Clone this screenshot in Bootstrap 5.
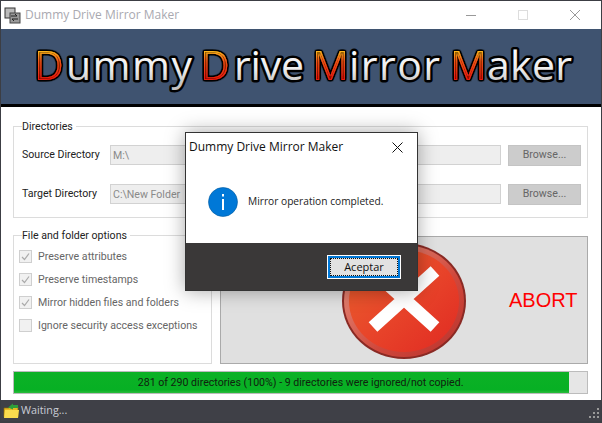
<!DOCTYPE html>
<html lang="en">
<head>
  <meta charset="utf-8">
  <meta name="viewport" content="width=device-width, initial-scale=1">
  <title>Dummy Drive Mirror Maker</title>
  <link href="https://cdn.jsdelivr.net/npm/bootstrap@5.3.2/dist/css/bootstrap.min.css" rel="stylesheet">
  <style>
    html, body { width: 602px; height: 423px; overflow: hidden; }
    body { background: #3c3e44; font-family: "Roboto", sans-serif; font-size: 10.6px; color: #222; }
    .app-window { position: relative; width: 600px; height: 420px; margin: 1px 0 0 1px; background: #fff; }
    .title-row { height: 28px; color: #a9a9b0; font-family: "Open Sans", sans-serif; font-size: 12px; padding-left: 3px; }
    .win-btn { width: 52px; height: 28px; }
    .banner { height: 78px; background: #3f5370; border-bottom: 3px solid #000; }
    .banner svg { display: block; }
    .banner text { font-family: "Open Sans", sans-serif; font-size: 41px; font-weight: 500; }
    .white-part { fill: url(#whiteFill); stroke: #000; stroke-width: 5px; stroke-linejoin: round; paint-order: stroke; }
    .fire-part { fill: url(#fireFill); filter: url(#fireEdge); }
    .content-area { padding: 11px 13px 0 12px; }
    .box-group { border: 1px solid #dcdcdc; margin: 0; min-width: 0; }
    .box-group legend { float: none; width: auto; font-size: 10.6px; line-height: 14px; margin: 0; padding: 2px 3px 0 0; color: #222; }
    .dir-box { height: 100px; padding: 0 6px 0 8px; }
    .dir-row { height: 22px; }
    .row-one { margin-top: 10px; }
    .row-two { margin-top: 17px; }
    .dir-label { width: 88px; flex: none; white-space: nowrap; color: #222; }
    .dir-input { height: 20px; min-width: 0; border: 1px solid #d2d2d2; color: #8a8a8a; font-size: 10.6px; padding: 0 2px; border-radius: 0; }
    .dir-input:disabled { background: #eee; }
    .browse-btn, .browse-btn:disabled { width: 73px; height: 21px; flex: none; margin-left: 7px; background: #ccc; border: 1px solid #c4c4c4; border-radius: 0; color: #666; font-size: 10.6px; padding: 0; opacity: 1; }
    .lower-row { margin-top: 9px; }
    .options-box { width: 199px; height: 137px; padding: 2px 5px 0; }
    .options-box legend { margin-left: 3px; }
    .opt-row { height: 23px; color: #666; white-space: nowrap; }
    .opt-check { width: 13px; height: 13px; border: 1px solid #cfcfcf; background: #f1f1f1; margin-right: 6px; flex: none; }
    .abort-panel { height: 128px; background: #e0e0e0; border: 1px solid #aaa; margin-top: 9px; }
    .ball-pic { margin: 2px 43px 0 0; }
    .abort-word { font-family: "Liberation Sans", sans-serif; font-size: 20px; color: #f00; width: 78px; }
    .copy-bar { height: 23px; margin-top: 7px; background: #e6e6e6; border: 1px solid #bcbcbc; border-radius: 0; font-size: 10.6px; }
    .copy-fill { width: 96.9%; padding-left: 18px; background: linear-gradient(#0cb126, #07b024 85%, #2abd3d); color: #10220f; }
    .status-row { position: absolute; left: 0; right: 0; top: 399px; height: 21px; background: #3f4047; color: #c9ccd6; font-family: "Open Sans", sans-serif; font-size: 10.8px; padding-left: 2px; }
    .status-row .grip { position: absolute; right: 1px; bottom: 1px; }
    .notice-box { position: absolute; left: 184px; top: 131px; width: 233px; height: 159px; background: #fff; border: 1px solid #333; box-shadow: 0 0 18px rgba(0,0,0,.35); }
    .notice-head { height: 28px; padding-left: 3px; font-family: "Open Sans", sans-serif; font-size: 12px; color: #111; }
    .notice-close { margin-right: 14px; }
    .notice-body { height: 82px; padding-left: 22px; color: #222; font-family: "Open Sans", sans-serif; font-size: 10.2px; }
    .info-pic { margin-right: 10px; }
    .notice-foot { height: 47px; background: #3a3838; padding-right: 17px; }
    .accept-btn { width: 72px; height: 22px; background: #e2e2e2; border: 2px solid #0078d7; outline: 1px solid #fff; border-radius: 0; font-family: "Open Sans", sans-serif; font-size: 11px; line-height: 14px; color: #111; padding: 0; position: relative; }
    .accept-btn::after { content: ""; position: absolute; inset: 0; border: 1px dotted #111; }
  </style>
</head>
<body>
  <div class="app-window d-flex flex-column">
    <div class="title-row d-flex align-items-center">
      <svg width="17" height="17" viewBox="0 0 17 17" class="me-1">
        <rect x="1" y="1" width="10" height="10" fill="#bbb" stroke="#333"/>
        <rect x="6" y="6" width="10" height="10" fill="#999" stroke="#444"/>
        <path d="M7 9h6l-2-2M14 12H8l2 2" fill="none" stroke="#222"/>
      </svg>
      <span class="flex-grow-1">Dummy Drive Mirror Maker</span>
      <div class="win-btn d-flex align-items-center justify-content-center">
        <svg width="10" height="10"><path d="M0 5.500h10" stroke="#999"/></svg>
      </div>
      <div class="win-btn d-flex align-items-center justify-content-center">
        <svg width="10" height="10"><rect x=".5" y=".5" width="9" height="9" fill="none" stroke="#ddd"/></svg>
      </div>
      <div class="win-btn d-flex align-items-center justify-content-center">
        <svg width="10" height="10"><path d="M0 0l10 10M10 0L0 10" stroke="#999"/></svg>
      </div>
    </div>

    <div class="banner">
      <svg width="600" height="75" viewBox="0 0 600 75">
        <defs>
          <linearGradient id="fireFill" x1="0" y1="0" x2="0" y2="1">
            <stop offset=".25" stop-color="#ffc21c"/>
            <stop offset=".45" stop-color="#f5551a"/>
            <stop offset=".8" stop-color="#e8160f"/>
          </linearGradient>
          <linearGradient id="whiteFill" x1="0" y1="0" x2="0" y2="1">
            <stop offset=".2" stop-color="#fff"/>
            <stop offset=".6" stop-color="#ececec"/>
            <stop offset=".85" stop-color="#c4c4c4"/>
          </linearGradient>
          <filter id="fireEdge" x="-30%" y="-30%" width="160%" height="160%">
            <feGaussianBlur in="SourceAlpha" stdDeviation="1.300" result="soft"/>
            <feComponentTransfer in="soft" result="edge">
              <feFuncA type="linear" slope="8"/>
            </feComponentTransfer>
            <feMorphology in="SourceAlpha" operator="erode" radius="1" result="thin"/>
            <feFlood flood-color="#1a0000" flood-opacity=".7"/>
            <feComposite in2="thin" operator="in" result="core"/>
            <feMerge>
              <feMergeNode in="edge"/>
              <feMergeNode in="SourceGraphic"/>
              <feMergeNode in="core"/>
            </feMerge>
          </filter>
        </defs>
        <text class="fire-part" x="33" y="51">D</text>
        <text class="white-part" x="65" y="51" textLength="126">ummy</text>
        <text class="fire-part" x="199" y="51">D</text>
        <text class="white-part" x="233" y="51" textLength="70">rive</text>
        <text class="fire-part" x="311" y="51">M</text>
        <text class="white-part" x="348" y="51" textLength="91">irror</text>
        <text class="fire-part" x="449" y="51">M</text>
        <text class="white-part" x="486" y="51" textLength="85">aker</text>
      </svg>
    </div>

    <div class="content-area flex-grow-1">
      <fieldset class="box-group dir-box">
        <legend>Directories</legend>
        <div class="dir-row row-one d-flex align-items-center">
          <span class="dir-label">Source Directory</span>
          <input class="form-control dir-input flex-grow-1" value="M:\" disabled>
          <button class="btn browse-btn" disabled>Browse...</button>
        </div>
        <div class="dir-row row-two d-flex align-items-center">
          <span class="dir-label">Target Directory</span>
          <input class="form-control dir-input flex-grow-1" value="C:\New Folder" disabled>
          <button class="btn browse-btn" disabled>Browse...</button>
        </div>
      </fieldset>

      <div class="lower-row d-flex gap-2">
        <fieldset class="box-group options-box flex-shrink-0">
          <legend>File and folder options</legend>
          <div class="opt-row d-flex align-items-center">
            <span class="opt-check d-flex"><svg width="11" height="11"><path d="M2 6l2.500 2.500L9 2.500" fill="none" stroke="#aaa" stroke-width="1.200"/></svg></span>
            Preserve attributes
          </div>
          <div class="opt-row d-flex align-items-center">
            <span class="opt-check d-flex"><svg width="11" height="11"><path d="M2 6l2.500 2.500L9 2.500" fill="none" stroke="#aaa" stroke-width="1.200"/></svg></span>
            Preserve timestamps
          </div>
          <div class="opt-row d-flex align-items-center">
            <span class="opt-check d-flex"><svg width="11" height="11"><path d="M2 6l2.500 2.500L9 2.500" fill="none" stroke="#aaa" stroke-width="1.200"/></svg></span>
            Mirror hidden files and folders
          </div>
          <div class="opt-row d-flex align-items-center">
            <span class="opt-check"></span>
            Ignore security access exceptions
          </div>
        </fieldset>
        <div class="abort-panel flex-grow-1 d-flex align-items-center justify-content-end">
          <svg class="ball-pic" width="124" height="118" viewBox="0 0 124 118">
            <defs>
              <linearGradient id="redBall" x1="0" y1="0" x2="1" y2="1">
                <stop offset="0" stop-color="#e8622c"/>
                <stop offset=".5" stop-color="#e8452a"/>
                <stop offset="1" stop-color="#e02a22"/>
              </linearGradient>
              <linearGradient id="ballRing" x1="0" y1="0" x2="1" y2="1">
                <stop offset="0" stop-color="#eca08c"/>
                <stop offset=".6" stop-color="#d0483c"/>
                <stop offset="1" stop-color="#b8322c"/>
              </linearGradient>
            </defs>
            <ellipse cx="62" cy="59" rx="62" ry="58" fill="#8a2a24"/>
            <ellipse cx="62" cy="59" rx="60" ry="56" fill="url(#ballRing)"/>
            <ellipse cx="62" cy="59" rx="55" ry="51" fill="url(#redBall)"/>
            <path d="M31 85L93 29M31 29L93 85" stroke="#fff" stroke-width="13" fill="none"/>
          </svg>
          <span class="abort-word">ABORT</span>
        </div>
      </div>

      <div class="progress copy-bar">
        <div class="progress-bar copy-fill" role="progressbar">281 of 290 directories (100%) - 9 directories were ignored/not copied.</div>
      </div>
    </div>

    <div class="status-row d-flex align-items-center">
      <svg width="16" height="16" viewBox="0 0 16 16" style="margin-right:2px">
        <path d="M1 5h5l1-1h8v10H1z" fill="#e8b820" stroke="#8a6a10" stroke-width=".7"/>
        <path d="M1 15l1-8h14l-1 8z" fill="#fbdc4e"/>
        <path d="M5 4.500l5-4V2h5v3h-5v1.500z" fill="#2f9e3a"/>
      </svg>
      <span>Waiting...</span>
      <svg class="grip" width="12" height="12" viewBox="0 0 12 12" fill="#999">
        <rect x="9" y="0" width="2" height="2"/><rect x="5" y="4" width="2" height="2"/><rect x="9" y="4" width="2" height="2"/>
        <rect x="1" y="8" width="2" height="2"/><rect x="5" y="8" width="2" height="2"/><rect x="9" y="8" width="2" height="2"/>
      </svg>
    </div>

    <div class="notice-box">
      <div class="notice-head d-flex align-items-center justify-content-between">
        <span>Dummy Drive Mirror Maker</span>
        <svg class="notice-close" width="11" height="11"><path d="M.5.5l10 10M10.500.5l-10 10" stroke="#111"/></svg>
      </div>
      <div class="notice-body d-flex align-items-center">
        <svg class="info-pic" width="30" height="30" viewBox="0 0 30 30">
          <circle cx="15" cy="15" r="14.500" fill="#0078d7" stroke="#005a9e" stroke-width=".6"/>
          <rect x="14" y="12" width="2" height="11" fill="#fff"/>
          <rect x="14" y="7" width="2" height="2.500" fill="#fff"/>
        </svg>
        <span>Mirror operation completed.</span>
      </div>
      <div class="notice-foot d-flex align-items-center justify-content-end">
        <button class="btn accept-btn">Aceptar</button>
      </div>
    </div>
  </div>
  <script src="https://cdn.jsdelivr.net/npm/bootstrap@5.3.2/dist/js/bootstrap.bundle.min.js"></script>
</body>
</html>
